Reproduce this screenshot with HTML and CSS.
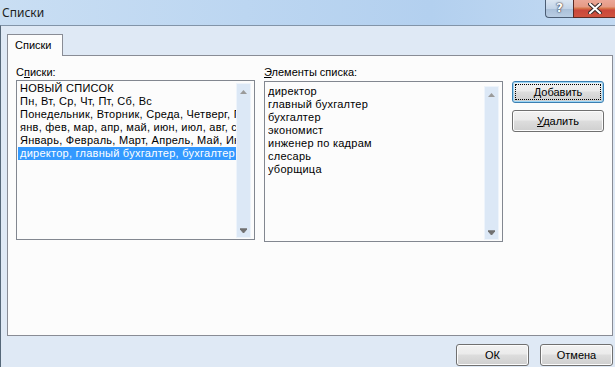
FILE: index.html
```html
<!DOCTYPE html>
<html lang="ru">
<head>
    <meta charset="UTF-8">
    <title>Списки</title>
    <link rel="stylesheet" href="styles.css">
</head>
<body>
    <div class="window">
        <div class="titlebar">
            <span class="title">Списки</span>
            <div class="caption-buttons">
                <div class="cap-help">?</div>
                <div class="cap-close">
                    <svg width="14" height="11" viewBox="0 0 14 11">
                        <path d="M2 1 L12 10 M12 1 L2 10" stroke="#3a2a2a" stroke-width="4" stroke-linecap="square"/>
                        <path d="M2 1 L12 10 M12 1 L2 10" stroke="#fff" stroke-width="2" stroke-linecap="square"/>
                    </svg>
                </div>
            </div>
        </div>
        <div class="client">
            <div class="tabs">
                <div class="tab">Списки</div>
            </div>
            <div class="panel">
                <div class="field-label">С<u>п</u>иски:</div>
                <div class="field-label"><u>Э</u>лементы списка:</div>
                <div></div>

                <div class="listbox">
                    <div class="items">
                        <div class="item">НОВЫЙ СПИСОК</div>
                        <div class="item">Пн, Вт, Ср, Чт, Пт, Сб, Вс</div>
                        <div class="item">Понедельник, Вторник, Среда, Четверг, Пятница</div>
                        <div class="item">янв, фев, мар, апр, май, июн, июл, авг, сен</div>
                        <div class="item">Январь, Февраль, Март, Апрель, Май, Июнь</div>
                        <div class="item selected">директор, главный бухгалтер, бухгалтер</div>
                    </div>
                    <div class="scrollbar">
                        <svg class="arrow" width="7" height="4" viewBox="0 0 7 4"><path d="M0 4 L3.5 0 L7 4 Z" fill="#9a9a9a"/></svg>
                        <svg class="arrow" width="7" height="5" viewBox="0 0 7 5"><path d="M0 0 H7 M0 1 L3.5 5 L7 1 Z" stroke="#707070" stroke-width="1" fill="#707070"/></svg>
                    </div>
                </div>

                <div class="listbox editbox">
                    <div class="items">
                        <div class="item">директор</div>
                        <div class="item">главный бухгалтер</div>
                        <div class="item">бухгалтер</div>
                        <div class="item">экономист</div>
                        <div class="item">инженер по кадрам</div>
                        <div class="item">слесарь</div>
                        <div class="item">уборщица</div>
                    </div>
                    <div class="scrollbar">
                        <svg class="arrow" width="7" height="4" viewBox="0 0 7 4"><path d="M0 4 L3.5 0 L7 4 Z" fill="#9a9a9a"/></svg>
                        <svg class="arrow" width="7" height="5" viewBox="0 0 7 5"><path d="M0 0 H7 M0 1 L3.5 5 L7 1 Z" stroke="#707070" stroke-width="1" fill="#707070"/></svg>
                    </div>
                </div>

                <div class="side-buttons">
                    <button class="btn focused"><span class="focus-rect"><u>Д</u>обавить</span></button>
                    <button class="btn"><u>У</u>далить</button>
                </div>
            </div>
            <div class="footer">
                <button class="btn footer-btn">ОК</button>
                <button class="btn footer-btn">Отмена</button>
            </div>
        </div>
    </div>
</body>
</html>
```

FILE: styles.css
```css
body {
    margin: 0;
    padding: 0;
    font-family: "Liberation Sans", Arial, sans-serif;
    font-size: 11px;
    color: #000;
    background-color: #dfe9f5;
}
.window {
    width: 615px;
    height: 367px;
    display: flex;
    flex-direction: column;
    overflow: hidden;
}
.titlebar {
    height: 25px;
    flex-shrink: 0;
    display: flex;
    justify-content: space-between;
    align-items: flex-start;
    background: linear-gradient(to right, #c9def3 0%, #bcd6f1 40%, #b3d0ef 70%, #c3daf2 100%);
}
.title {
    font-family: "Noto Sans", sans-serif;
    font-size: 12px;
    line-height: 25px;
    padding-left: 2px;
    color: #1e1e1e;
}
.caption-buttons {
    display: flex;
}
.cap-help {
    width: 27px;
    height: 17px;
    border: 1px solid #4b5d74;
    border-top: none;
    border-right: none;
    border-bottom-left-radius: 4px;
    background: linear-gradient(#dbe6f2 0%, #c3d4e8 50%, #a9bfd8 51%, #b9cde3 100%);
    color: #fff;
    font-family: "DejaVu Sans", sans-serif;
    font-weight: bold;
    font-size: 12px;
    line-height: 16px;
    text-align: center;
    text-shadow: 0 0 2px #223, 0 0 1px #223;
}
.cap-close {
    width: 41px;
    height: 17px;
    border-bottom: 1px solid #5a2a24;
    border-left: 1px solid #5a2a24;
    background: linear-gradient(#eba898 0%, #e59a85 40%, #d87a4c 48%, #c9473b 60%, #d0533f 100%);
    display: flex;
    align-items: center;
    justify-content: center;
}
.client {
    flex: 1;
    display: flex;
    flex-direction: column;
    border-top: 1px solid #8294a8;
    border-left: 1px solid #566879;
    padding: 8px 2px 0 6px;
    background-color: #dfe9f5;
}
.tabs {
    display: flex;
    height: 21px;
}
.tab {
    width: 56px;
    height: 22px;
    box-sizing: border-box;
    border: 1px solid #898c95;
    border-bottom: none;
    background-color: #fcfcfc;
    padding-left: 7px;
    line-height: 21px;
    position: relative;
    z-index: 1;
}
.panel {
    height: 281px;
    box-sizing: border-box;
    border: 1px solid #898c95;
    background-color: #fcfcfc;
    padding: 10px 0 0 8px;
    display: grid;
    grid-template-columns: 239px 239px 92px;
    grid-template-rows: 14px 162px;
    column-gap: 9px;
    align-items: start;
}
.field-label {
    line-height: 13px;
    white-space: nowrap;
}
.listbox {
    height: 160px;
    box-sizing: border-box;
    border: 1px solid #828790;
    background-color: #fcfcfc;
    display: flex;
    padding: 1px 3px 1px 1px;
}
.editbox {
    margin-top: 1px;
    height: 161px;
    padding: 3px 3px 1px 3px;
}
.items {
    flex: 1;
    min-width: 0;
    overflow: hidden;
}
.item {
    height: 13px;
    line-height: 13px;
    white-space: nowrap;
    overflow: hidden;
    padding-left: 2px;
    letter-spacing: 0.25px;
}
.editbox .item {
    padding-left: 0;
}
.item.selected {
    background-color: #3399ff;
    color: #fff;
}
.scrollbar {
    width: 13px;
    flex-shrink: 0;
    margin-top: 1px;
    background-color: #dce8f6;
    border: 1px solid #eef4fb;
    display: flex;
    flex-direction: column;
    justify-content: space-between;
    align-items: center;
    padding: 6px 0 4px;
}
.side-buttons {
    display: flex;
    flex-direction: column;
    gap: 7px;
    margin-top: 1px;
}
.btn {
    font-family: "Liberation Sans", Arial, sans-serif;
    font-size: 11px;
    color: #000;
    height: 22px;
    box-sizing: border-box;
    border: 1px solid #707070;
    border-radius: 3px;
    background: linear-gradient(#f2f2f2 0%, #ebebeb 45%, #dddddd 50%, #cfcfcf 100%);
    box-shadow: inset 0 0 0 1px #fcfcfc;
    padding: 0;
    cursor: pointer;
}
.side-buttons .btn {
    width: 92px;
}
.btn.focused {
    border-color: #3c7fb1;
    box-shadow: inset 0 0 0 1px #9bd6f7;
    padding: 2px;
}
.focus-rect {
    display: block;
    height: 100%;
    box-sizing: border-box;
    border: 1px dotted #000;
    line-height: 14px;
}
.footer {
    display: flex;
    justify-content: flex-end;
    gap: 11px;
    padding-top: 8px;
}
.footer-btn {
    width: 73px;
}
```
